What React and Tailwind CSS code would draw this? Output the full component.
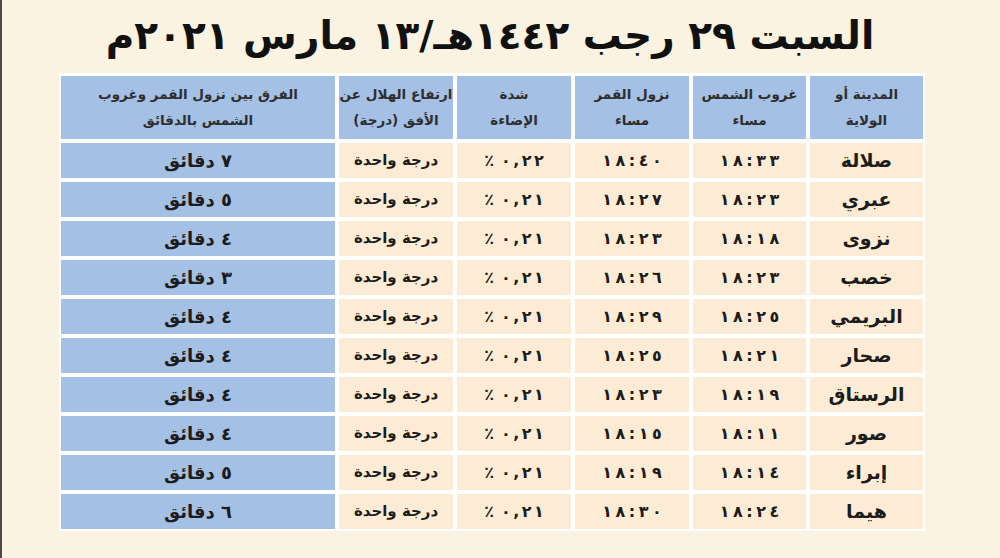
import React from 'react';

const rows = [
    { city: 'صلالة', sunset: '١٨:٣٣', moonset: '١٨:٤٠', light: '٪ ٠,٢٢', diff: '٧ دقائق' },
    { city: 'عبري', sunset: '١٨:٢٣', moonset: '١٨:٢٧', light: '٪ ٠,٢١', diff: '٥ دقائق' },
    { city: 'نزوى', sunset: '١٨:١٨', moonset: '١٨:٢٣', light: '٪ ٠,٢١', diff: '٤ دقائق' },
    { city: 'خصب', sunset: '١٨:٢٣', moonset: '١٨:٢٦', light: '٪ ٠,٢١', diff: '٣ دقائق' },
    { city: 'البريمي', sunset: '١٨:٢٥', moonset: '١٨:٢٩', light: '٪ ٠,٢١', diff: '٤ دقائق' },
    { city: 'صحار', sunset: '١٨:٢١', moonset: '١٨:٢٥', light: '٪ ٠,٢١', diff: '٤ دقائق' },
    { city: 'الرستاق', sunset: '١٨:١٩', moonset: '١٨:٢٣', light: '٪ ٠,٢١', diff: '٤ دقائق' },
    { city: 'صور', sunset: '١٨:١١', moonset: '١٨:١٥', light: '٪ ٠,٢١', diff: '٤ دقائق' },
    { city: 'إبراء', sunset: '١٨:١٤', moonset: '١٨:١٩', light: '٪ ٠,٢١', diff: '٥ دقائق' },
    { city: 'هيما', sunset: '١٨:٢٤', moonset: '١٨:٣٠', light: '٪ ٠,٢١', diff: '٦ دقائق' },
];

const headers = [
    ['المدينة أو', 'الولاية'],
    ['غروب الشمس', 'مساء'],
    ['نزول القمر', 'مساء'],
    ['شدة', 'الإضاءة'],
    ['ارتفاع الهلال عن', 'الأفق (درجة)'],
    ['الفرق بين نزول القمر وغروب', 'الشمس بالدقائق'],
];

// digits drawn one by one so they get the loose spacing of the print
function Spaced({ text, gap }) {
    return (
        <span dir="ltr" className={`inline-flex items-center ${gap}`}>
            {text.split('').map((c, i) => (
                <span key={i} className={c === ' ' ? 'w-[2px]' : ''}>
                    {c === ' ' ? '' : c}
                </span>
            ))}
        </span>
    );
}

export default function App() {
    return (
        <div
            dir="ltr"
            className="min-h-[558px] w-[1000px] bg-[#faf3e1] border-l-2 border-[#4a4a4a]"
            style={{ fontFamily: '"DejaVu Sans", "Noto Sans", sans-serif' }}
        >
            <div className="ml-[57px] w-[866px]">
                {/* Title */}
                <h1
                    dir="rtl"
                    className="h-[73px] flex items-center justify-center pb-[2px] pr-[4px] text-[39px] font-bold leading-none text-[#111]"
                >
                    السبت ٢٩ رجب ١٤٤٢هـ/١٣ مارس ٢٠٢١م
                </h1>

                {/* Table */}
                <div className="bg-white pt-[3px] pb-[2px] px-[2px]">
                    <div
                        dir="rtl"
                        className="grid grid-cols-[113px_113px_114px_114px_114px_274px] grid-rows-[63px] auto-rows-[35px] gap-[4px]"
                    >
                        {headers.map((h, i) => (
                            <div
                                key={i}
                                className="bg-[#a4c0e5] flex flex-col items-center justify-center gap-[12px] text-[13.5px] font-bold text-[#2e2e2e] leading-none whitespace-nowrap"
                            >
                                <span>{h[0]}</span>
                                <span>{h[1]}</span>
                            </div>
                        ))}

                        {rows.map((r) => (
                            <React.Fragment key={r.city}>
                                <div className="bg-[#fdecd5] flex items-center justify-center text-[19px] font-bold text-[#1c1c1c]">
                                    {r.city}
                                </div>
                                <div className="bg-[#fdecd5] flex items-center justify-center text-[16px] font-bold text-[#1c1c1c]">
                                    <Spaced text={r.sunset} gap="gap-[3.5px]" />
                                </div>
                                <div className="bg-[#fdecd5] flex items-center justify-center text-[16px] font-bold text-[#1c1c1c]">
                                    <Spaced text={r.moonset} gap="gap-[3.5px]" />
                                </div>
                                <div className="bg-[#fdecd5] flex items-center justify-center text-[16px] font-bold text-[#1c1c1c]">
                                    <Spaced text={r.light} gap="gap-[2.5px]" />
                                </div>
                                <div className="bg-[#fdecd5] flex items-center justify-center text-[15px] font-bold text-[#1c1c1c]">
                                    درجة واحدة
                                </div>
                                <div className="bg-[#a4c0e5] flex items-center justify-center text-[18px] font-bold text-[#1c1c1c]">
                                    {r.diff}
                                </div>
                            </React.Fragment>
                        ))}
                    </div>
                </div>
            </div>
        </div>
    );
}
